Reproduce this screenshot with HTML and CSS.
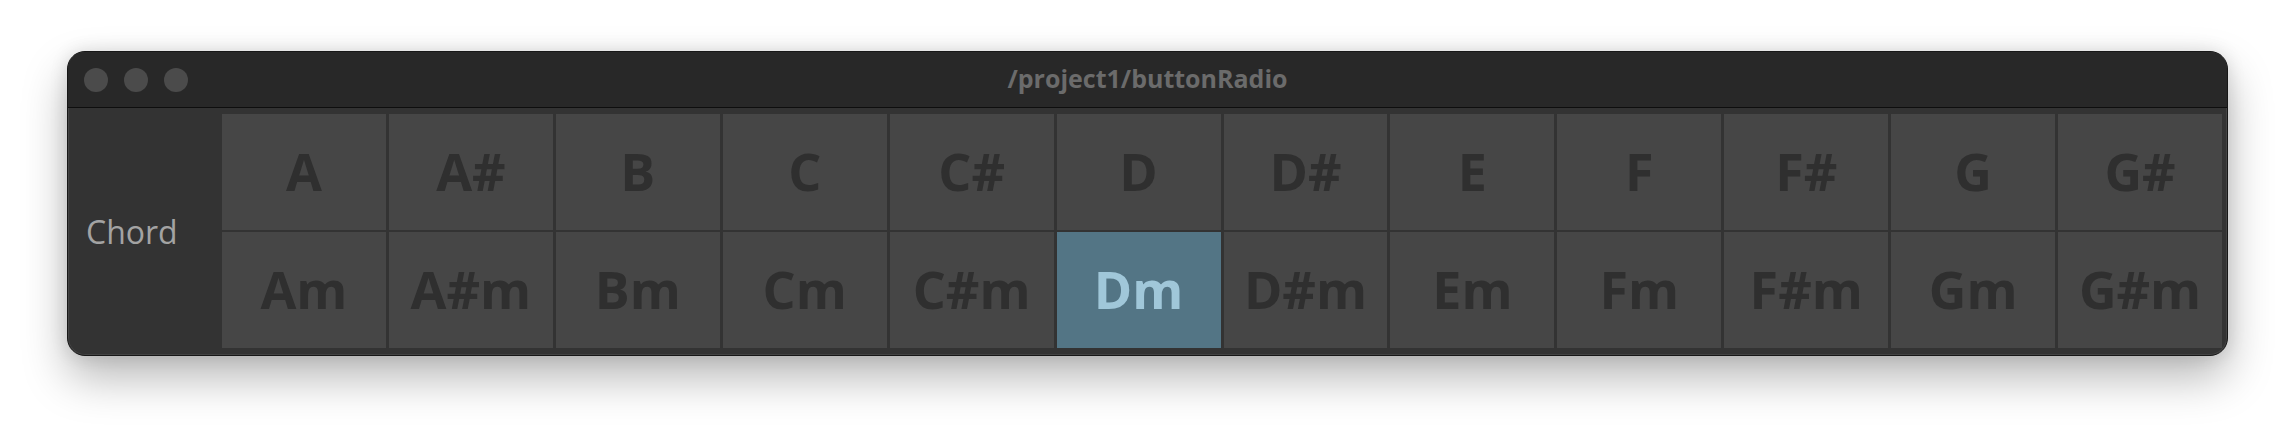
FILE: index.html
```html
<!DOCTYPE html>
<html>
<head>
<meta charset="utf-8">
<link rel="stylesheet" href="styles.css">
</head>
<body>
<div class="window">
  <div class="titlebar">
    <div class="lights"><span class="light"></span><span class="light"></span><span class="light"></span></div>
    <div class="title">/project1/buttonRadio</div>
    <div class="spacer"></div>
  </div>
  <div class="content">
    <div class="label">Chord</div>
    <div class="grid">
      <div class="cell">A</div><div class="cell">A#</div><div class="cell">B</div><div class="cell">C</div><div class="cell">C#</div><div class="cell">D</div><div class="cell">D#</div><div class="cell">E</div><div class="cell">F</div><div class="cell">F#</div><div class="cell">G</div><div class="cell">G#</div>
      <div class="cell">Am</div><div class="cell">A#m</div><div class="cell">Bm</div><div class="cell">Cm</div><div class="cell">C#m</div><div class="cell on">Dm</div><div class="cell">D#m</div><div class="cell">Em</div><div class="cell">Fm</div><div class="cell">F#m</div><div class="cell">Gm</div><div class="cell">G#m</div>
    </div>
  </div>
</div>
</body>
</html>
```
FILE: styles.css
```css
html, body {
  margin: 0;
  background: #ffffff;
}
body {
  padding: 51px 0 0 67px;
  min-height: 440px;
  box-sizing: border-box;
}
.window {
  width: 2161px;
  height: 305px;
  box-sizing: border-box;
  border: 1px solid #171717;
  border-radius: 18px;
  background: #333333;
  overflow: hidden;
  display: flex;
  flex-direction: column;
  box-shadow: 0 22px 45px rgba(0, 0, 0, 0.28), 0 0 18px rgba(0, 0, 0, 0.12), inset 0 0 0 1px rgba(255, 255, 255, 0.08);
}
.titlebar {
  height: 55px;
  flex: none;
  border-bottom: 1px solid #0e0e0e;
  background: #282828;
  display: grid;
  grid-template-columns: 1fr auto 1fr;
  align-items: center;
}
.lights {
  display: flex;
  gap: 16px;
  padding-left: 16px;
}
.light {
  width: 24px;
  height: 24px;
  border-radius: 50%;
  background: #4b4b4b;
}
.title {
  font: 700 25px/1 "Open Sans", sans-serif;
  color: #6b6b6b;
  padding-bottom: 2px;
}
.content {
  flex: 1;
  display: flex;
  padding: 6px 5px 7px 0;
}
.label {
  width: 154px;
  flex: none;
  box-sizing: border-box;
  padding-left: 18px;
  display: flex;
  align-items: center;
  font: 400 32px "Open Sans", sans-serif;
  color: #a3a3a3;
}
.grid {
  flex: 1;
  display: grid;
  grid-template-columns: repeat(12, 1fr);
  grid-template-rows: 1fr 1fr;
  gap: 2px 3px;
}
.cell {
  background: #464646;
  display: flex;
  align-items: center;
  justify-content: center;
  padding-bottom: 3px;
  font: 700 52px/1 "Open Sans", sans-serif;
  color: #2f2f2f;
}
.cell.on {
  background: #537585;
  color: #a0c7d9;
}
```
